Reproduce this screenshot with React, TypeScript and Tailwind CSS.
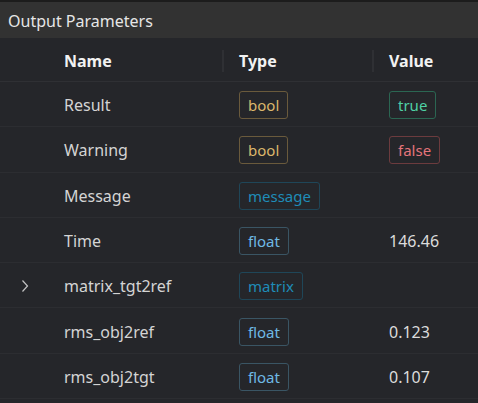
import React from 'react';

type Tone = 'bool' | 'true' | 'false' | 'message' | 'float';

const toneClass: Record<Tone, string> = {
  bool: 'border-[#6a5a3c] text-[#dcb76c]',
  true: 'border-[#2b6652] text-[#4fd0a4]',
  false: 'border-[#6c3b3e] text-[#e4747b]',
  message: 'border-[#1f4658] text-[#1f8cb8]',
  float: 'border-[#3a5564] text-[#6fb9e4]',
};

interface Row {
  name: string;
  type: string;
  typeTone: Tone;
  value?: string;
  valueTone?: Tone;
  expandable?: boolean;
}

const rows: Row[] = [
  { name: 'Result', type: 'bool', typeTone: 'bool', value: 'true', valueTone: 'true' },
  { name: 'Warning', type: 'bool', typeTone: 'bool', value: 'false', valueTone: 'false' },
  { name: 'Message', type: 'message', typeTone: 'message' },
  { name: 'Time', type: 'float', typeTone: 'float', value: '146.46' },
  { name: 'matrix_tgt2ref', type: 'matrix', typeTone: 'message', expandable: true },
  { name: 'rms_obj2ref', type: 'float', typeTone: 'float', value: '0.123' },
  { name: 'rms_obj2tgt', type: 'float', typeTone: 'float', value: '0.107' },
];

const Badge: React.FC<{ text: string; tone: Tone }> = ({ text, tone }) => (
  <span className={`inline-flex h-[28px] items-center rounded-[3px] border px-[8px] pt-[1px] text-[15px] leading-none ${toneClass[tone]}`}>
    {text}
  </span>
);

const App: React.FC = () => {
  return (
    <div
      className="w-[478px] h-[403px] overflow-hidden bg-[#25262a] text-[#d6d6d6]"
      style={{ fontFamily: '"Segoe UI", "Noto Sans", sans-serif' }}
    >
      {/* Title bar */}
      <div className="h-[38px] border-t-2 border-[#1c1c1c] bg-[#323232] flex items-center pl-[8px] pt-[2px] text-[16px] text-[#e6e6e6]">
        Output Parameters
      </div>

      {/* Column header */}
      <div className="grid grid-cols-[64px_158px_150px_1fr] h-[44px] items-center border-b border-[#2f3034] pt-[2px] font-bold text-[16px] text-[#f2f2f2]">
        <div />
        <div>Name</div>
        <div className="flex items-center h-full">
          <div className="w-[2px] h-[22px] bg-[#2f3034]" />
          <span className="pl-[15px]">Type</span>
        </div>
        <div className="flex items-center h-full">
          <div className="w-[2px] h-[22px] bg-[#2f3034]" />
          <span className="pl-[15px]">Value</span>
        </div>
      </div>

      {rows.map((r) => (
        <div
          key={r.name}
          className="grid grid-cols-[64px_158px_150px_1fr] h-[45.3px] items-center border-b border-[#2c2d31] pt-[2px] text-[16px]"
        >
          <div className="pl-[20px]">
            {r.expandable && (
              <svg width="10" height="14" viewBox="0 0 10 14" fill="none" className="block">
                <path d="M2.5 1.5 L7.5 7 L2.5 12.5" stroke="#c4c4c4" strokeWidth="1.2" />
              </svg>
            )}
          </div>
          <div className="text-[#d4d4d4]">{r.name}</div>
          <div className="pl-[17px]">
            <Badge text={r.type} tone={r.typeTone} />
          </div>
          <div className="pl-[17px]">
            {r.value && (r.valueTone ? <Badge text={r.value} tone={r.valueTone} /> : <span className="text-[#dcdcdc]">{r.value}</span>)}
          </div>
        </div>
      ))}
    </div>
  );
};

export default App;
